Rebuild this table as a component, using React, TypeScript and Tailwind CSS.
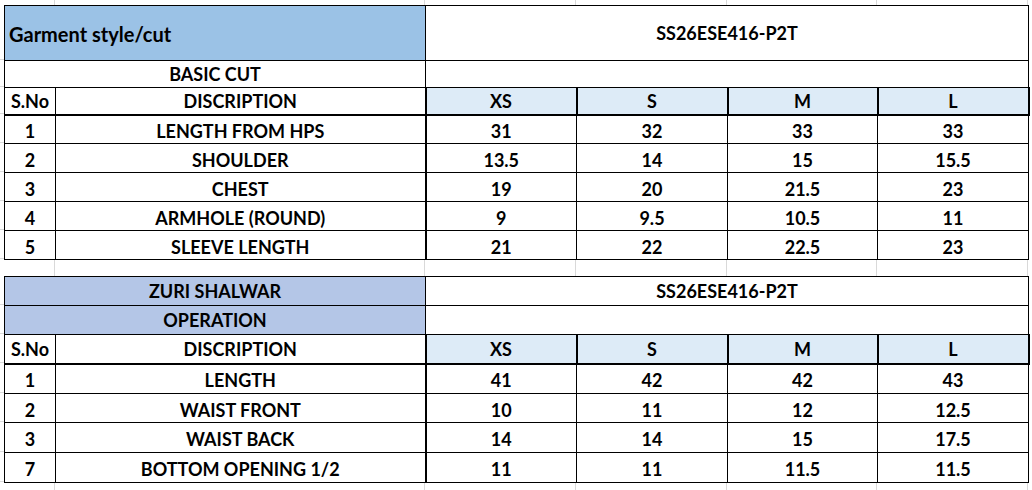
import React from "react"

const COLS = [51, 370, 151, 151, 150, 151]
const SIZES = ["XS", "S", "M", "L"]

const basicCut = [
  { no: "1", name: "LENGTH FROM HPS", vals: ["31", "32", "33", "33"] },
  { no: "2", name: "SHOULDER", vals: ["13.5", "14", "15", "15.5"] },
  { no: "3", name: "CHEST", vals: ["19", "20", "21.5", "23"] },
  { no: "4", name: "ARMHOLE (ROUND)", vals: ["9", "9.5", "10.5", "11"] },
  { no: "5", name: "SLEEVE LENGTH", vals: ["21", "22", "22.5", "23"] },
]

const shalwar = [
  { no: "1", name: "LENGTH", vals: ["41", "42", "42", "43"], h: "h-[30px]" },
  { no: "2", name: "WAIST FRONT", vals: ["10", "11", "12", "12.5"], h: "h-[29px]" },
  { no: "3", name: "WAIST BACK", vals: ["14", "14", "15", "17.5"], h: "h-[30px]" },
  { no: "7", name: "BOTTOM OPENING 1/2", vals: ["11", "11", "11.5", "11.5"], h: "h-[30px]" },
]

const cell = "border border-black p-0 text-center align-middle font-bold"
// data rows sit a touch low, like excel's bottom alignment
const dataCell = `${cell} pt-[3px]`

// excel gridlines between / around the bordered blocks
function GridStrip({ h }: { h: string }) {
  return (
    <div className={`flex ${h}`}>
      <div className="w-[4px] shrink-0" />
      {COLS.map((w, i) => (
        <div key={i} className="shrink-0 border-r border-[#d9d9d9]" style={{ width: w }} />
      ))}
      <div className="flex-1" />
    </div>
  )
}

function Gutter({ rows }: { rows: number[] }) {
  return (
    <div className="flex w-[4px] shrink-0 flex-col">
      {rows.map((h, i) => (
        <div key={i} className="shrink-0 border-b border-[#d9d9d9]" style={{ height: h }} />
      ))}
    </div>
  )
}

function Cols() {
  return (
    <colgroup>
      {COLS.map((w, i) => (
        <col key={i} style={{ width: w }} />
      ))}
    </colgroup>
  )
}

function SizeHeader() {
  return (
    <>
      <td className={`${cell} border-b-2`}>S.No</td>
      <td className={`${cell} border-b-2 border-r-2`}>DISCRIPTION</td>
      {SIZES.map((s) => (
        <td key={s} className={`${cell} border-2 border-t bg-[#ddebf7]`}>
          {s}
        </td>
      ))}
    </>
  )
}

export default function App() {
  return (
    <div className="h-[490px] w-[1032px] overflow-hidden bg-white font-[Lato,'Open_Sans',sans-serif] text-[18px] leading-none text-black">
      <GridStrip h="h-[5px]" />

      <div className="flex">
        <Gutter rows={[55, 27, 27, 29, 29, 29, 29, 29]} />
        <table className="w-[1024px] table-fixed border-collapse">
          <Cols />
          <tbody>
            <tr className="h-[55px]">
              <td colSpan={2} className={`${cell} bg-[#9bc2e6] pl-[4px] pt-[2px] text-left text-[20px]`}>
                Garment style/cut
              </td>
              <td colSpan={4} className={cell}>
                SS26ESE416-P2T
              </td>
            </tr>
            <tr className="h-[27px]">
              <td colSpan={2} className={cell}>
                BASIC CUT
              </td>
              <td colSpan={4} className={cell} />
            </tr>
            <tr className="h-[27px]">
              <SizeHeader />
            </tr>
            {basicCut.map((r) => (
              <tr key={r.no} className="h-[29px]">
                <td className={dataCell}>{r.no}</td>
                <td className={`${dataCell} border-r-2`}>{r.name}</td>
                {r.vals.map((v, i) => (
                  <td key={i} className={dataCell}>
                    {v}
                  </td>
                ))}
              </tr>
            ))}
          </tbody>
        </table>
      </div>

      <GridStrip h="h-[16px]" />

      <div className="flex">
        <Gutter rows={[29, 29, 29, 30, 29, 30, 30]} />
        <table className="w-[1024px] table-fixed border-collapse">
          <Cols />
          <tbody>
            <tr className="h-[29px]">
              <td colSpan={2} className={`${cell} bg-[#b4c6e7]`}>
                ZURI SHALWAR
              </td>
              <td colSpan={4} className={cell}>
                SS26ESE416-P2T
              </td>
            </tr>
            <tr className="h-[29px]">
              <td colSpan={2} className={`${cell} bg-[#b4c6e7]`}>
                OPERATION
              </td>
              <td colSpan={4} className={cell} />
            </tr>
            <tr className="h-[29px]">
              <SizeHeader />
            </tr>
            {shalwar.map((r) => (
              <tr key={r.no} className={r.h}>
                <td className={dataCell}>{r.no}</td>
                <td className={`${dataCell} border-r-2`}>{r.name}</td>
                {r.vals.map((v, i) => (
                  <td key={i} className={dataCell}>
                    {v}
                  </td>
                ))}
              </tr>
            ))}
          </tbody>
        </table>
      </div>

      <GridStrip h="h-[20px]" />
    </div>
  )
}
